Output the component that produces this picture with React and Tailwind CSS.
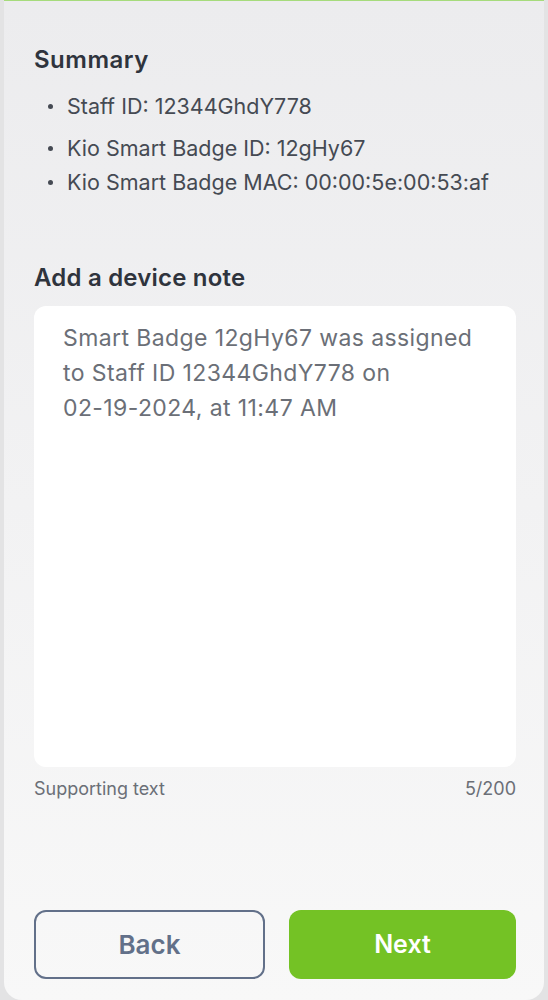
import React from 'react'

const items = [
  { label: 'Staff ID: 12344GhdY778', cls: 'mt-[18px]' },
  { label: 'Kio Smart Badge ID: 12gHy67', cls: 'mt-[14px]' },
  { label: 'Kio Smart Badge MAC: 00:00:5e:00:53:af', cls: 'mt-[6px]' },
]

export default function App() {
  return (
    <div className="h-[1000px] bg-[#e3e3e4] px-1 font-['Inter','Noto_Sans',sans-serif]">
      <div className="flex h-full flex-col rounded-b-[18px] border-t border-[#a6db7c] bg-gradient-to-b from-[#ececee] to-[#f8f8f8] pl-[30px] pr-[28px]">
        <h2 className="mt-[45px] text-[24px] font-semibold leading-7 tracking-[0.5px] text-[#2f343d]">Summary</h2>
        <ul className="pl-[14px]">
          {items.map((it) => (
            <li key={it.label} className={`flex items-center gap-[14px] text-[21.5px] leading-7 text-[#454a53] ${it.cls}`}>
              <span className="h-[5px] w-[5px] shrink-0 rounded-full bg-[#454a53]" />
              <span className="whitespace-nowrap">{it.label}</span>
            </li>
          ))}
        </ul>

        <h2 className="mt-[68px] text-[24px] font-semibold leading-7 tracking-[0.2px] text-[#2f343d]">Add a device note</h2>
        {/* note field, shown filled in */}
        <div className="mt-[14px] h-[461px] w-full rounded-xl bg-white px-[29px] pt-[15px] text-[23px] leading-[35px] tracking-[0.4px] text-[#6b6f77]">
          Smart Badge 12gHy67 was assigned to Staff ID 12344GhdY778 on{' '}
          <span className="whitespace-nowrap">02-19-2024,</span> at 11:47 AM
        </div>
        <div className="mt-[12px] flex justify-between text-[18px] leading-5 text-[#6b6f77]">
          <span>Supporting text</span>
          <span>5/200</span>
        </div>

        <div className="mt-auto mb-[21px] flex gap-6">
          <button
            type="button"
            className="h-[69px] flex-1 rounded-xl border-2 border-[#627089] text-[26px] font-semibold text-[#627089]"
          >
            Back
          </button>
          <button
            type="button"
            className="h-[69px] flex-1 rounded-xl bg-[#74c225] text-[25px] font-semibold text-white"
          >
            Next
          </button>
        </div>
      </div>
    </div>
  )
}
